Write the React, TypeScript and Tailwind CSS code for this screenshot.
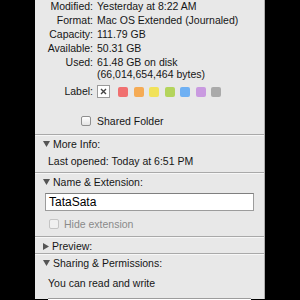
import React from 'react';

const infoRows = [
  { label: 'Modified:', value: 'Yesterday at 8:22 AM' },
  { label: 'Format:', value: 'Mac OS Extended (Journaled)' },
  { label: 'Capacity:', value: '111.79 GB' },
  { label: 'Available:', value: '50.31 GB' },
];

const swatches = ['#f07070', '#f5ab55', '#f1e25a', '#b4d45c', '#6fb0f3', '#c99ae0', '#aaaaaa'];

function Separator() {
  return (
    <div>
      <div className="h-px bg-[#a9a9a9]" />
      <div className="h-px bg-[#f7f7f7]" />
    </div>
  );
}

function Disclosure({ open }: { open: boolean }) {
  return open ? (
    <svg width="7" height="6" viewBox="0 0 7 6" className="shrink-0">
      <path d="M0 0h7L3.5 6z" fill="#555" />
    </svg>
  ) : (
    <svg width="6" height="7" viewBox="0 0 6 7" className="shrink-0">
      <path d="M0 0v7L6 3.5z" fill="#555" />
    </svg>
  );
}

function SectionHeader({ title, open }: { title: string; open: boolean }) {
  return (
    <div className="h-[16px] flex items-center gap-[3px] pl-[8px]">
      <Disclosure open={open} />
      <span>{title}</span>
    </div>
  );
}

function Checkbox({ disabled }: { disabled?: boolean }) {
  return (
    <div
      className={
        disabled
          ? 'w-[10px] h-[10px] rounded-[2px] border border-[#c4c4c4] bg-[#f0f0f0]'
          : 'w-[10px] h-[10px] rounded-[2px] border border-[#8f8f8f] bg-gradient-to-b from-white to-[#e4e4e4]'
      }
    />
  );
}

export default function App() {
  return (
    <div className="w-[300px] h-[300px] bg-black overflow-hidden">
      <div className="ml-[35px] w-[230px] h-full bg-[#e8e8e8] border-r border-[#b0b0b0] text-[10.5px] leading-[14px] text-[#161616] font-['Liberation_Sans',Arial,sans-serif]">
        {/* General info */}
        <div className="mt-[-1px] grid grid-cols-[58px_1fr] gap-x-[4px]">
          {infoRows.map((row) => (
            <React.Fragment key={row.label}>
              <div className="text-right">{row.label}</div>
              <div>{row.value}</div>
            </React.Fragment>
          ))}
          <div className="text-right">Used:</div>
          <div>
            <div>61.48 GB on disk</div>
            <div className="leading-[11px]">(66,014,654,464 bytes)</div>
          </div>
          <div className="text-right mt-[5px] leading-[13px]">Label:</div>
          <div className="mt-[5px] flex items-center">
            <div className="w-[13px] h-[13px] border border-[#9a9a9a] bg-white flex items-center justify-center mr-[8px]">
              <svg width="7" height="7" viewBox="0 0 7 7">
                <path d="M1 1l5 5M6 1l-5 5" stroke="#444" strokeWidth="1.4" />
              </svg>
            </div>
            {swatches.map((c) => (
              <div
                key={c}
                className="w-[10px] h-[10px] rounded-[2px] mr-[5.5px]"
                style={{ backgroundColor: c }}
              />
            ))}
          </div>
        </div>

        <div className="mt-[17px] mb-[7px] pl-[46px] flex items-center gap-[6px] h-[12px]">
          <Checkbox />
          <span>Shared Folder</span>
        </div>

        <Separator />

        {/* More Info */}
        <div>
          <SectionHeader title="More Info:" open />
          <div className="pl-[13px] mt-[2px] h-[18px]">Last opened: Today at 6:51 PM</div>
        </div>

        <Separator />

        {/* Name & Extension */}
        <div>
          <SectionHeader title="Name & Extension:" open />
          <div className="mx-[10px] mt-[3px] h-[18px] bg-white border border-[#9c9c9c] border-t-[#7f7f7f] flex items-center pl-[3px] text-[12px] text-black">
            TataSata
          </div>
          <div className="pl-[14px] mt-[7px] h-[12px] flex items-center gap-[5px] text-[#8a8a8a]">
            <Checkbox disabled />
            <span>Hide extension</span>
          </div>
        </div>

        <div className="h-[6px]" />
        <Separator />

        {/* Preview */}
        <div className="h-[15px]">
          <SectionHeader title="Preview:" open={false} />
        </div>

        <Separator />

        {/* Sharing & Permissions */}
        <div>
          <SectionHeader title="Sharing & Permissions:" open />
          <div className="pl-[13px] mt-[5px] h-[14px]">You can read and write</div>
          <div className="mx-[13px] mt-[8px] h-[20px] border-t border-[#9c9c9c] bg-white" />
        </div>
      </div>
    </div>
  );
}
